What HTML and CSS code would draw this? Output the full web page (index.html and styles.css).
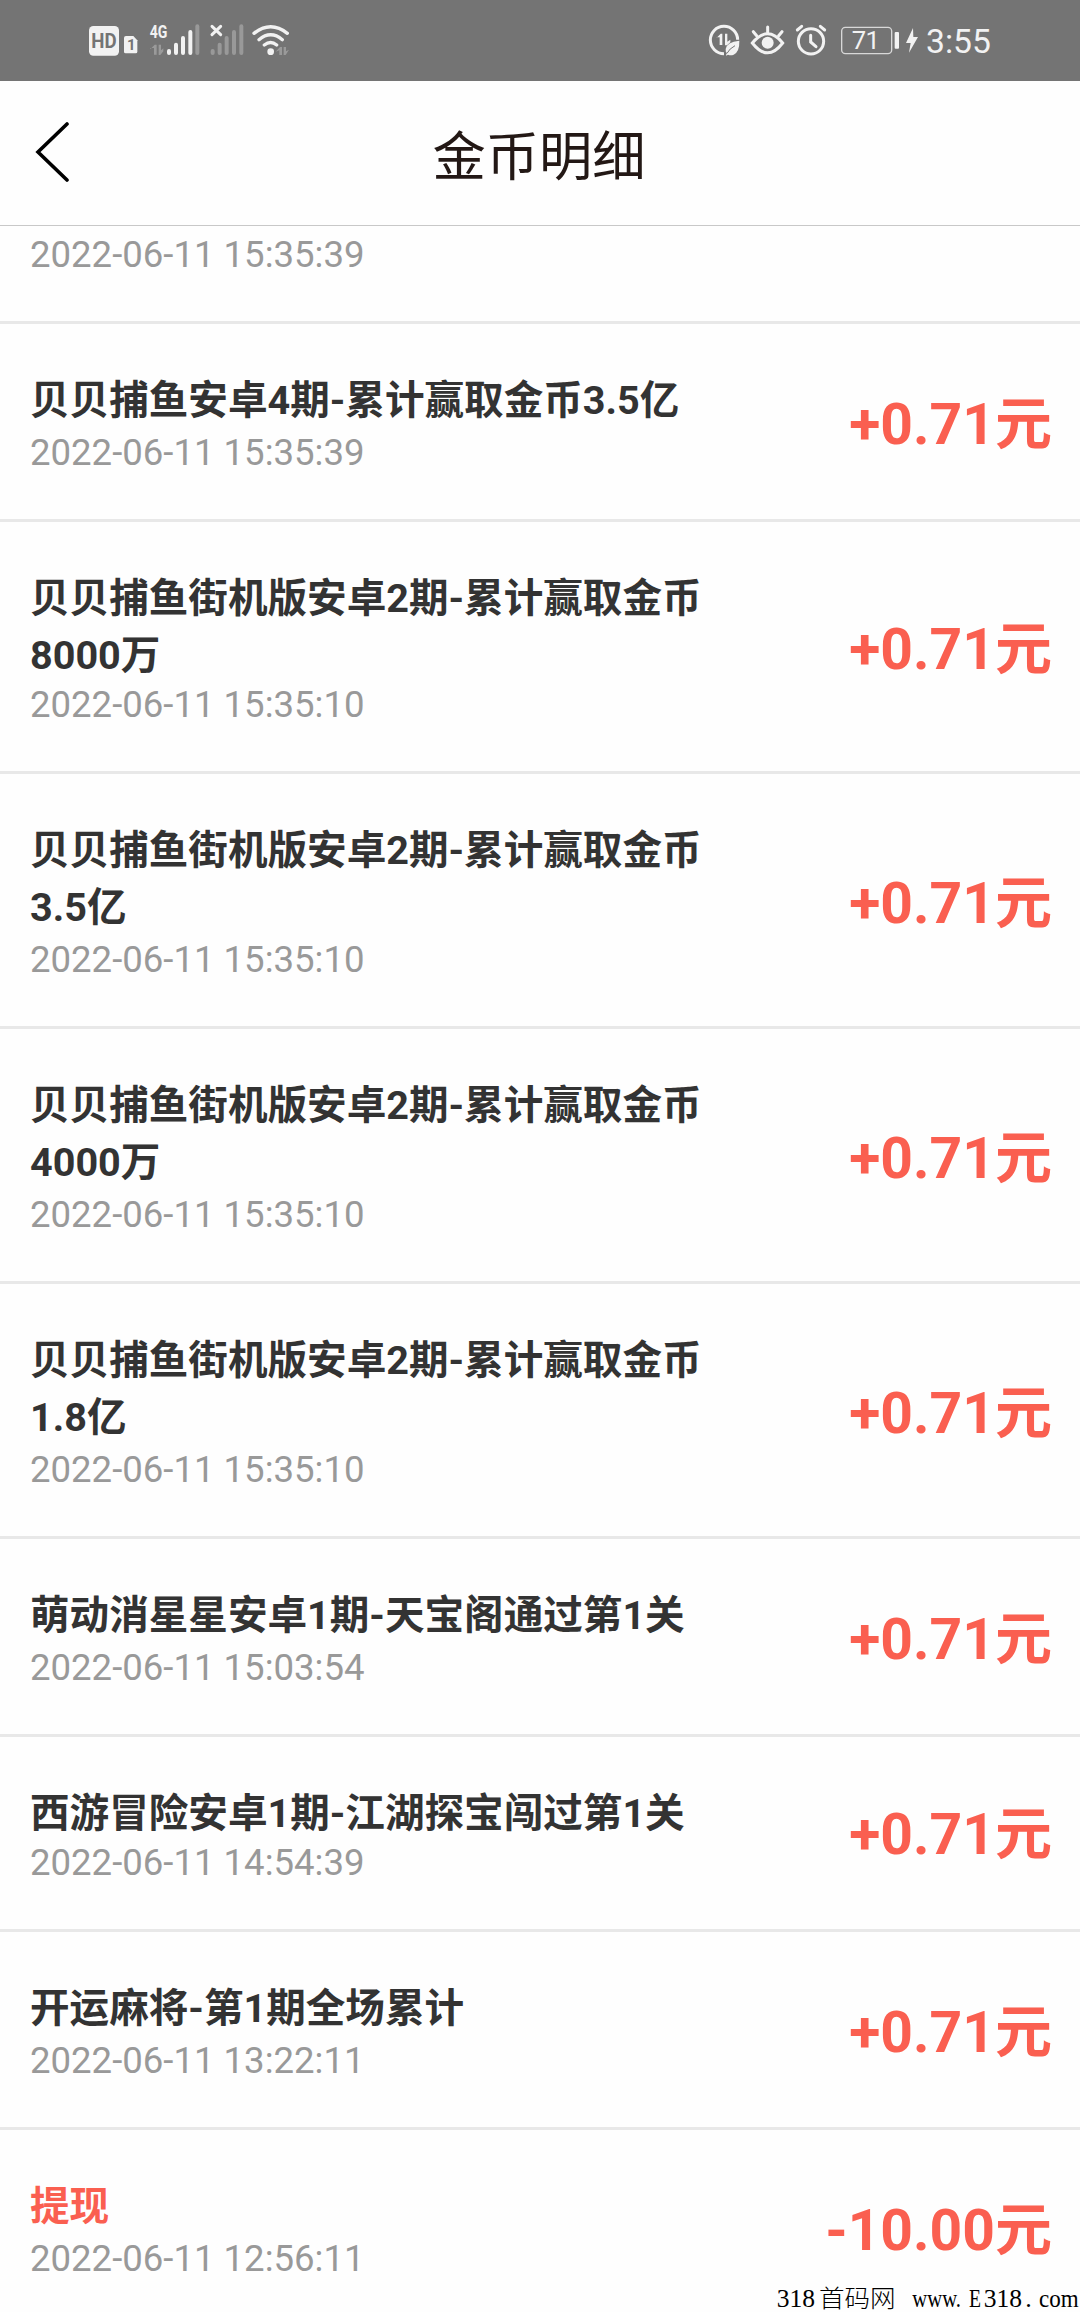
FILE: index.html
```html
<!DOCTYPE html>
<html lang="zh-CN">
<head>
<meta charset="utf-8">
<title>金币明细</title>
<link rel="stylesheet" href="styles.css">
</head>
<body>
<div class="screen">
  <div class="status">
    <svg class="status-left" viewBox="0 0 720 243" fill="#f2f2f2">
      <rect x="57" y="78" width="90" height="89" rx="13"/>
      <text x="64" y="144" class="hd" textLength="76" lengthAdjust="spacingAndGlyphs">HD</text>
      <path d="M168 108h22l12 13v34q0 5-5 5h-30q-5 0-5-5v-41q0-6 6-6z"/>
      <text x="171" y="151" class="sim">1</text>
      <text x="239" y="115" class="net" textLength="53" lengthAdjust="spacingAndGlyphs">4G</text>
      <g fill="#9a9a9a"><path d="M241 148l13-14h6v30h-8v-20h-11zM266 134h7v17l7-6v9l-9 11h-5zM617 155l13-14h6v24h-8v-14zM641 141h7v13l9-5-10 16h-6z"/></g>
      <g stroke-width="12" stroke-linecap="round" stroke="#f2f2f2">
        <path d="M297 153v6M318 134v25M339 114v45M361 96v63"/>
        <path stroke="#999" d="M382 79v80M428 153v6M449 134v25M470 114v45M492 96v63M514 79v80"/>
      </g>
      <path d="M426 79l26 25M452 79l-26 25" stroke="#f2f2f2" stroke-width="9" stroke-linecap="round"/>
      <g fill="none" stroke="#f2f2f2" stroke-width="10" stroke-linecap="round"><path d="M552 100Q602 61 652 100M567 119Q602 90 637 119M583 135Q602 120 620 135"/></g>
      <circle cx="602" cy="155" r="10"/>
    </svg>
    <svg class="status-right" viewBox="0 0 960 243" fill="#f2f2f2">
      <path d="M143 119A41 41 0 1 0 102 161" fill="none" stroke="#f2f2f2" stroke-width="9"/>
      <path d="M80 113l12-12h5v34h-8v-23h-9zM105 101h7v24l9-6v8l-10 9h-6z"/>
      <path d="M148 122q-38 4-41 25-1 9 4 12-3 4-3 8l6-3q8 4 17 0 18-9 17-42z"/>
      <path d="M111 160q7-14 24-23" stroke="#747474" stroke-width="3" fill="none"/>
      <path d="M187 129Q233 74 278 129Q233 188 187 129z" fill="none" stroke="#f2f2f2" stroke-width="9"/>
      <circle cx="233" cy="128" r="18"/>
      <path d="M233 81v16M190 95l10 12M276 95l-10 12" stroke="#f2f2f2" stroke-width="9" stroke-linecap="round"/>
      <circle cx="363" cy="124" r="38" fill="none" stroke="#f2f2f2" stroke-width="9"/>
      <path d="M322 90l13-11M404 90l-13-11M362 106v20l16 14" fill="none" stroke="#f2f2f2" stroke-width="9" stroke-linecap="round"/>
      <rect x="455" y="82" width="150" height="79" rx="11" fill="none" stroke="#d8d8d8" stroke-width="4"/>
      <text x="485" y="147" class="battery">71</text>
      <rect x="614" y="96" width="13" height="50" rx="3"/>
      <path d="M669 84l-21 45h14l-5 29 27-47h-14z"/>
      <text x="708" y="158" class="clock">3:55</text>
    </svg>
  </div>
  <header class="header">
    <svg class="back" viewBox="0 0 36 60"><path d="M33 2L4 30L33 58" fill="none" stroke="#000" stroke-width="3.6" stroke-linecap="round"/></svg>
    <h1 class="heading">金币明细</h1>
    <span class="header-end"></span>
  </header>
  <main class="list">
    <section class="row cut"><div class="info"><p class="date">2022-06-11 15:35:39</p></div></section>
    <section class="row"><div class="info"><h2 class="name">贝贝捕鱼安卓4期-累计赢取金币3.5亿</h2><p class="date">2022-06-11 15:35:39</p></div><strong class="amount">+0.71元</strong></section>
    <section class="row double-first"><div class="info"><h2 class="name">贝贝捕鱼街机版安卓2期-累计赢取金币<br>8000万</h2><p class="date">2022-06-11 15:35:10</p></div><strong class="amount">+0.71元</strong></section>
    <section class="row double"><div class="info"><h2 class="name">贝贝捕鱼街机版安卓2期-累计赢取金币<br>3.5亿</h2><p class="date">2022-06-11 15:35:10</p></div><strong class="amount">+0.71元</strong></section>
    <section class="row double"><div class="info"><h2 class="name">贝贝捕鱼街机版安卓2期-累计赢取金币<br>4000万</h2><p class="date">2022-06-11 15:35:10</p></div><strong class="amount">+0.71元</strong></section>
    <section class="row double"><div class="info"><h2 class="name">贝贝捕鱼街机版安卓2期-累计赢取金币<br>1.8亿</h2><p class="date">2022-06-11 15:35:10</p></div><strong class="amount">+0.71元</strong></section>
    <section class="row"><div class="info"><h2 class="name">萌动消星星安卓1期-天宝阁通过第1关</h2><p class="date">2022-06-11 15:03:54</p></div><strong class="amount">+0.71元</strong></section>
    <section class="row tight"><div class="info"><h2 class="name">西游冒险安卓1期-江湖探宝闯过第1关</h2><p class="date">2022-06-11 14:54:39</p></div><strong class="amount">+0.71元</strong></section>
    <section class="row"><div class="info"><h2 class="name">开运麻将-第1期全场累计</h2><p class="date">2022-06-11 13:22:11</p></div><strong class="amount">+0.71元</strong></section>
    <section class="row"><div class="info"><h2 class="name withdraw">提现</h2><p class="date">2022-06-11 12:56:11</p></div><strong class="amount">-10.00元</strong></section>
  </main>
  <svg class="watermark" viewBox="0 -30 1020 120">
    <text y="76" x="110" textLength="115" lengthAdjust="spacingAndGlyphs">318</text>
    <text y="75" x="237" class="cjk" textLength="230" lengthAdjust="spacingAndGlyphs">首码网</text>
    <text y="76" x="517" textLength="146" lengthAdjust="spacingAndGlyphs">www.</text>
    <text y="76" x="687" textLength="36" lengthAdjust="spacingAndGlyphs">E</text>
    <text y="76" x="731" textLength="115" lengthAdjust="spacingAndGlyphs">318</text>
    <text y="76" x="856">.</text>
    <text y="76" x="897" textLength="119" lengthAdjust="spacingAndGlyphs">com</text>
  </svg>
</div>
</body>
</html>
```
FILE: styles.css
```css
* { box-sizing: border-box; margin: 0; padding: 0; }

body {
  background: #fefefe;
  font-family: Roboto, "Noto Sans CJK SC", sans-serif;
}

.screen {
  position: relative;
  height: 2312px;
  overflow: hidden;
}

.status {
  display: flex;
  justify-content: space-between;
  height: 81px;
  padding: 0 70px;
  background: #747474;
}
.status-left { width: 240px; height: 81px; }
.status-right { width: 320px; height: 81px; }
.hd { font-size: 59px; font-weight: 700; fill: #747474; }
.sim { font-size: 45px; font-weight: 700; fill: #747474; }
.net { font-size: 56px; font-weight: 700; }
.battery { font-size: 77px; letter-spacing: -2px; }
.clock { font-size: 101px; }

.header {
  display: flex;
  align-items: center;
  justify-content: space-between;
  height: 145px;
  padding: 0 34px;
  border-bottom: 1px solid #c8c8c8;
}
.back { width: 36px; height: 60px; margin-bottom: 3px; }
.header-end { width: 36px; }
.heading {
  padding-top: 9px;
  margin-right: 2px;
  color: #231815;
  font-size: 53.3px;
  font-weight: 400;
  line-height: 80px;
}

.row {
  display: flex;
  justify-content: space-between;
  align-items: center;
  height: 198px;
  padding: 0 28px 0 30px;
  border-bottom: 3px solid #e8e8e8;
}
.cut { height: 98px; }
.double-first { height: 252px; }
.double { height: 255px; }
.tight { height: 195px; }

.info {
  display: flex;
  flex-direction: column;
  justify-content: space-between;
  height: 100%;
  padding: 48px 0 45px;
}
.cut .info { padding-top: 0; justify-content: flex-end; }

.name {
  color: #333;
  font-size: 39.6px;
  font-weight: 700;
  line-height: 57px;
  white-space: nowrap;
}
.withdraw { color: #fa5f50; }

.date {
  color: #999;
  font-size: 36.55px;
  line-height: 42px;
}

.amount {
  padding-top: 7px;
  color: #fa5f50;
  font-size: 57px;
  font-weight: 700;
  line-height: 66px;
}
.tight .amount { padding-top: 4px; }

.watermark {
  position: absolute;
  right: 0;
  bottom: 0;
  width: 340px;
  height: 40px;
  font-family: "Liberation Serif", "Noto Sans CJK SC", serif;
  font-size: 78px;
}
.cjk { font-weight: 300; font-size: 72px; }
```
